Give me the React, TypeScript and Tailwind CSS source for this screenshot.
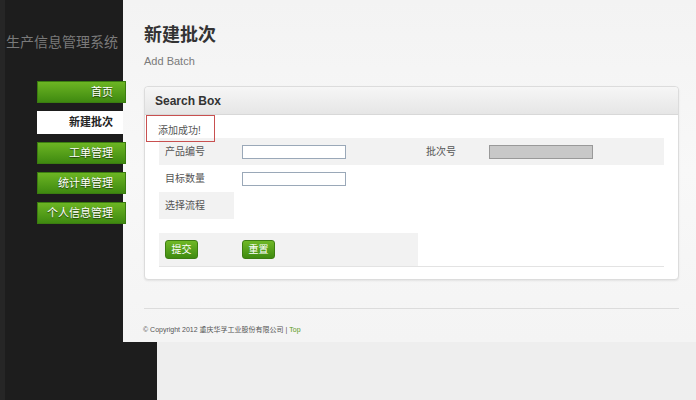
const cjk = { fontFamily: '"Liberation Sans", Arial, "Noto Sans CJK SC", sans-serif' }

const navItems = ['首页', '新建批次', '工单管理', '统计单管理', '个人信息管理']

function NavItem({ label, active }: { label: string; active?: boolean }) {
  if (active) {
    return (
      <div className="relative z-10 ml-[37px] flex h-[23px] items-center justify-end bg-white pr-[10px] text-[11px] font-bold text-[#222]">
        {label}
      </div>
    )
  }
  return (
    <div className="relative z-10 ml-[37px] mr-[-3px] flex h-[22px] items-center justify-end border border-[#3b7d10] bg-gradient-to-b from-[#6cb523] to-[#3f8a10] pr-[12px] text-[11px] text-white [text-shadow:0_1px_1px_rgba(0,0,0,0.6)]">
      {label}
    </div>
  )
}

function GreenButton({ label }: { label: string }) {
  return (
    <button
      type="button"
      className="flex h-[19px] w-[33px] items-center justify-center rounded-[3px] border border-[#3d7d12] bg-gradient-to-b from-[#6fb826] to-[#3f8b10] text-[10px] text-white"
    >
      {label}
    </button>
  )
}

export default function App() {
  return (
    <div className="flex h-[400px] w-[696px] flex-col overflow-hidden bg-[#eeeeee]" style={cjk}>
      <div className="flex h-[342px]">
        {/* sidebar */}
        <div className="flex w-[123px] shrink-0 flex-col border-l-[5px] border-[#262626] bg-[#1d1d1d]">
          <div className="mt-[33px] pl-[1px] text-[14px] leading-[18px] whitespace-nowrap text-[#7a7a7a]">
            生产信息管理系统
          </div>
          <div className="mt-[30px] ml-[-5px] flex flex-col gap-[8px]">
            {navItems.map((n) => (
              <NavItem key={n} label={n} active={n === '新建批次'} />
            ))}
          </div>
        </div>

        {/* content */}
        <div className="flex flex-1 flex-col bg-gradient-to-b from-[#f3f3f3] via-[#f8f8f8] to-[#f4f4f4] pl-[21px] pr-[17px]">
          <h1 className="mt-[24px] text-[18px] leading-[22px] font-bold text-[#333]">新建批次</h1>
          <div className="mt-[8px] text-[11px] leading-[14px] text-[#7a7a7a]">Add Batch</div>

          <div className="mt-[18px] rounded-[4px] border border-[#dcdcdc] bg-white shadow-[0_1px_2px_rgba(0,0,0,0.08)]">
            <div className="flex h-[28px] items-center rounded-t-[4px] border-b border-[#d8d8d8] bg-gradient-to-b from-[#f6f6f6] to-[#e6e6e6] pl-[10px] text-[12px] font-bold text-[#333]">
              Search Box
            </div>
            <div className="relative z-10 ml-[1px] mb-[-4px] flex h-[27px] w-[69px] items-end border border-[#c85050] pb-[3px] pl-[11px] text-[10px] text-[#555]">
              添加成功!
            </div>

            <div className="mx-[14px] mb-[12px] border-b border-[#e3e3e3] text-[10px] text-[#555]">
              <div className="flex h-[27px] items-center bg-[#f2f2f2]">
                <div className="w-[75px] pl-[6px]">产品编号</div>
                <div className="w-[186px] pl-[8px]">
                  <input className="block h-[14px] w-[104px] border border-[#9aa8b8] bg-white" />
                </div>
                <div className="w-[61px] pl-[6px]">批次号</div>
                <div className="pl-[8px]">
                  <input readOnly className="block h-[14px] w-[104px] border border-[#999] bg-[#c8c8c8]" />
                </div>
              </div>
              <div className="flex h-[27px] items-center">
                <div className="w-[75px] pl-[6px]">目标数量</div>
                <div className="pl-[8px]">
                  <input className="block h-[14px] w-[104px] border border-[#9aa8b8] bg-white" />
                </div>
              </div>
              <div className="flex h-[27px]">
                <div className="flex w-[75px] items-center bg-[#f2f2f2] pl-[6px]">选择流程</div>
              </div>
              <div className="mt-[14px] flex h-[33px] w-[259px] items-center bg-[#f2f2f2]">
                <div className="w-[75px] pl-[6px]">
                  <GreenButton label="提交" />
                </div>
                <div className="pl-[8px]">
                  <GreenButton label="重置" />
                </div>
              </div>
            </div>
          </div>

          <div className="mt-[28px] border-t border-[#dcdcdc]" />
          <div className="mt-[16px] ml-[-1px] text-[7px] whitespace-nowrap text-[#555]">
            © Copyright 2012 重庆华孚工业股份有限公司 | <span className="text-[#5a9a1a]">Top</span>
          </div>
        </div>
      </div>

      <div className="flex flex-1">
        <div className="w-[157px] border-l-[5px] border-[#262626] bg-[#1d1d1d]" />
        <div className="flex-1 bg-[#eeeeee]" />
      </div>
    </div>
  )
}
